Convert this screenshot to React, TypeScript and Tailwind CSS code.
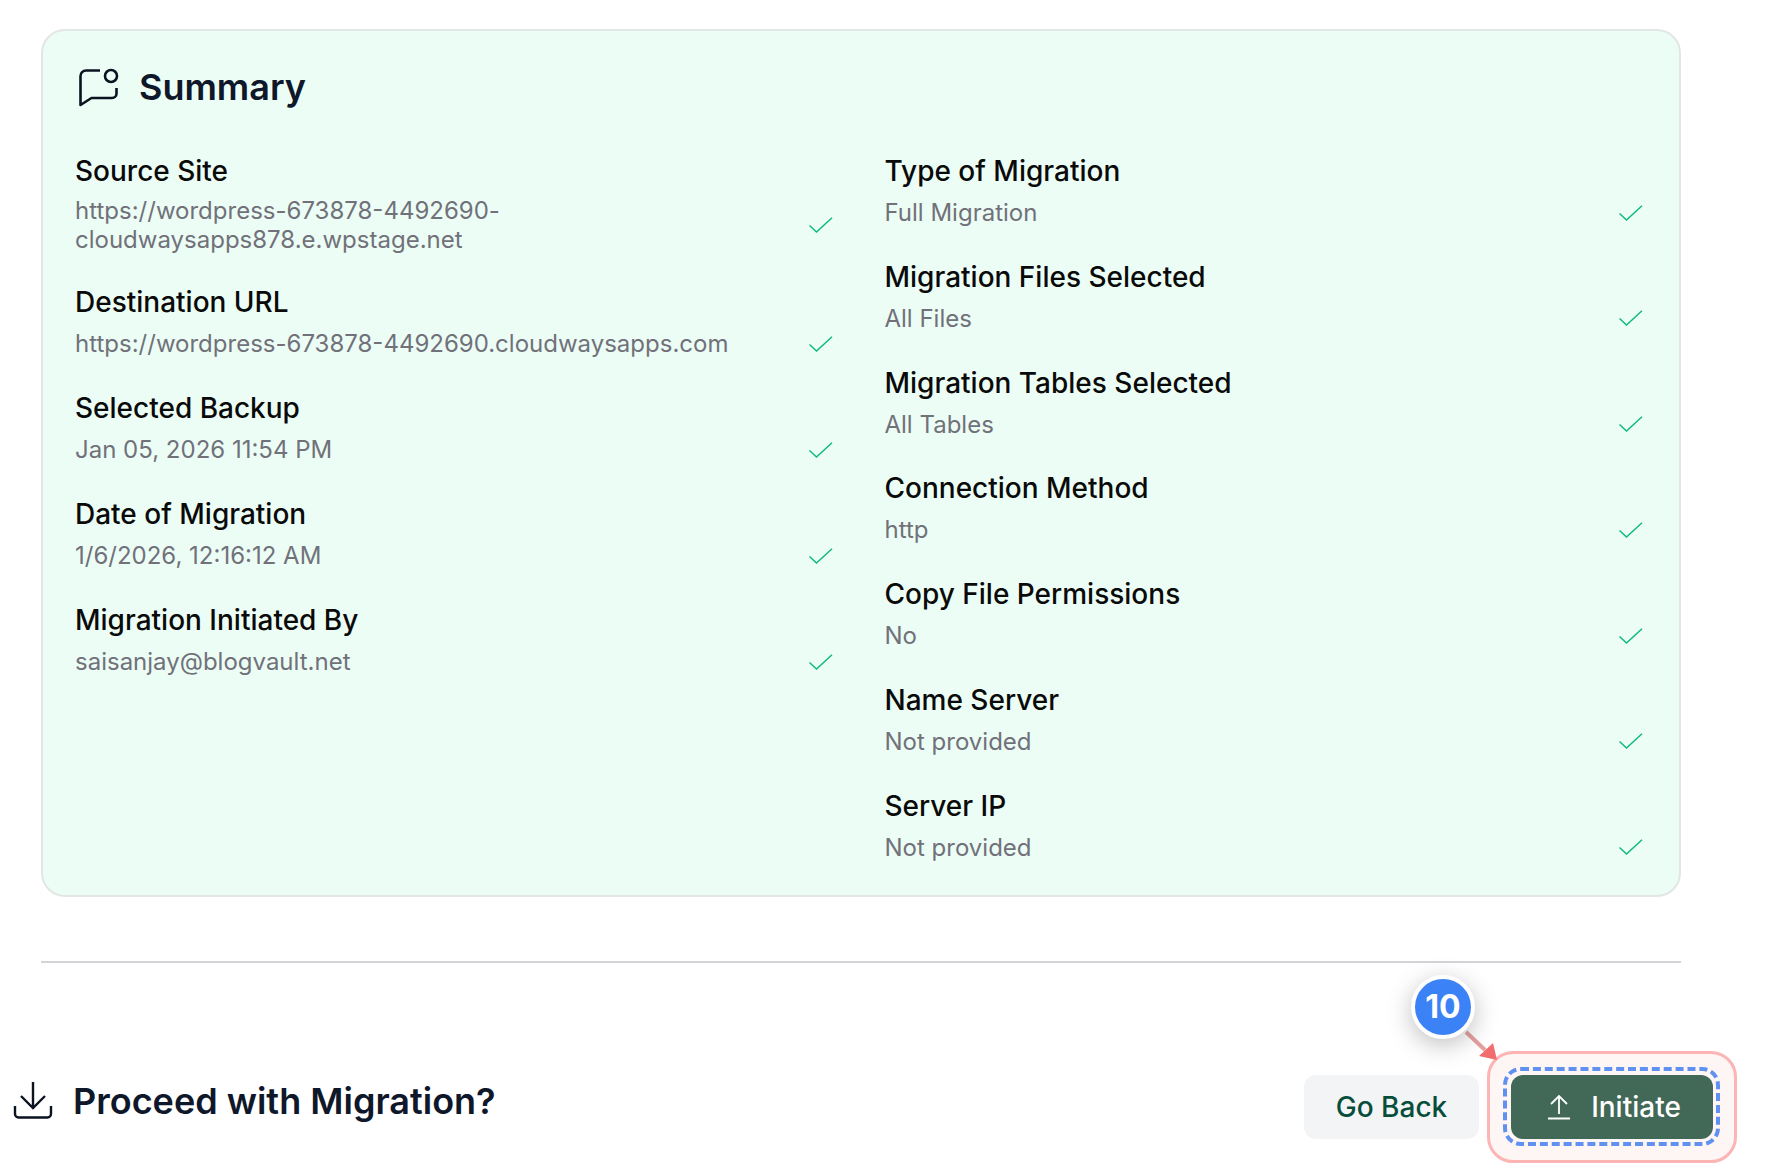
import React from "react";

const left = [
  ["Source Site", "https://wordpress-673878-4492690-cloudwaysapps878.e.wpstage.net"],
  ["Destination URL", "https://wordpress-673878-4492690.cloudwaysapps.com"],
  ["Selected Backup", "Jan 05, 2026 11:54 PM"],
  ["Date of Migration", "1/6/2026, 12:16:12 AM"],
  ["Migration Initiated By", "saisanjay@blogvault.net"],
];
const right = [
  ["Type of Migration", "Full Migration"],
  ["Migration Files Selected", "All Files"],
  ["Migration Tables Selected", "All Tables"],
  ["Connection Method", "http"],
  ["Copy File Permissions", "No"],
  ["Name Server", "Not provided"],
  ["Server IP", "Not provided"],
];

function Check() {
  return (
    <svg width="24" height="16" viewBox="0 0 24 16" fill="none" className="shrink-0">
      <path d="M0.5 8.5 L7.5 15 L23 0.8" stroke="#10b981" strokeWidth="1.5" />
    </svg>
  );
}

function Row({ label, value }: { label: string; value: string }) {
  return (
    <div className="flex flex-col">
      <div className="h-[36px] text-[28px] leading-[36px] font-medium text-[#0a0a0a]">{label}</div>
      <div className="mt-[7px] flex min-h-[33px] items-center justify-between gap-[60px]">
        <div className="text-[24px] leading-[29px] text-[#71717a]">{value}</div>
        <Check />
      </div>
    </div>
  );
}

export default function App() {
  return (
    <div
      className="relative h-[1172px] overflow-hidden bg-white pl-[13px] pr-[60px] pt-[29px]"
      style={{ fontFamily: "Inter, 'Noto Sans', sans-serif" }}
    >
      <section className="ml-[28px] mr-[32px] h-[868px] rounded-[24px] border-2 border-[#e2e6e5] bg-[#ecfdf5] pl-[32px] pr-[35px] pt-[32px]">
        <div className="flex h-[50px] items-center gap-[20px] pl-[4px]">
          <svg width="40" height="40" viewBox="0 0 40 40" fill="none" className="shrink-0">
            <path
              d="M21 2.5H7a5.5 5.5 0 0 0-5.5 5.5V37L12.5 30H33a4.5 4.5 0 0 0 4.5-4.5V20"
              stroke="#0b1220"
              strokeWidth="2.6"
              strokeLinejoin="round"
            />
            <circle cx="32" cy="8" r="6" stroke="#0b1220" strokeWidth="2.6" />
          </svg>
          <h2 className="mb-[2px] text-[36px] font-semibold leading-[48px] text-[#0f172a]">Summary</h2>
        </div>
        <div className="mt-[40px] grid grid-cols-2 gap-[50px]">
          <div className="flex flex-col gap-[30px] pr-[2px]">
            {left.map(([l, v]) => (
              <Row key={l} label={l} value={v} />
            ))}
          </div>
          <div className="flex flex-col gap-[29.8px] pr-[1px]">
            {right.map(([l, v]) => (
              <Row key={l} label={l} value={v} />
            ))}
          </div>
        </div>
      </section>

      <div className="ml-[28px] mr-[32px] mt-[64px] h-[2px] bg-[#d4d4d8]" />

      <div className="mt-[112px] flex items-center justify-between">
        <div className="mb-[12px] flex items-center gap-[20px]">
          <svg width="40" height="40" viewBox="0 0 40 40" fill="none" className="shrink-0">
            <path d="M2 25v8a3.5 3.5 0 0 0 3.5 3.5h29a3.5 3.5 0 0 0 3.5-3.5v-8" stroke="#0b1220" strokeWidth="2.4" />
            <path d="M20 1v25M8 15l12 12 12-12" stroke="#0b1220" strokeWidth="2.4" />
          </svg>
          <h2 className="text-[36px] font-semibold leading-[48px] text-[#0f172a]">Proceed with Migration?</h2>
        </div>
        <div className="flex items-center gap-[32px]">
          <button className="flex h-[64px] w-[175px] items-center justify-center rounded-[12px] bg-[#f3f4f6] text-[28px] font-medium text-[#064e3b]">
            Go Back
          </button>
          <div className="relative h-[64px] w-[202px]">
            <div className="absolute -inset-x-[24px] -inset-y-[24px] rounded-[26px] border-[3px] border-[#fdb4b4] bg-[#ef4444]/5" />
            <div className="absolute -left-[8px] -right-[7px] -top-[8px] -bottom-[7px] rounded-[18px] border-[4px] border-dashed border-[#6090f0]" />
            <button className="relative flex h-[64px] w-[202px] items-center justify-center gap-[20px] rounded-[12px] bg-[#426857] pl-[4px] text-[28px] font-medium text-white">
              <svg width="24" height="26" viewBox="0 0 24 26" fill="none">
                <path d="M12 20V2M4 10l8-8 8 8M1 24.5h22" stroke="#fff" strokeWidth="1.8" />
              </svg>
              Initiate
            </button>
            {/* Annotation pointer and badge */}
            <svg className="absolute -left-[51px] -top-[50px]" width="40" height="40" viewBox="0 0 40 40" fill="none">
              <path d="M6 7 L25 25" stroke="#e5a0a0" strokeWidth="4" />
              <path d="M19 31 L33 18 L37 35 Z" fill="#f26d6d" />
            </svg>
            <div className="absolute -left-[100px] -top-[100px] flex h-[64px] w-[64px] items-center justify-center rounded-full border-[4px] border-white bg-[#3b82f6] text-[32px] font-bold text-white shadow-[0_6px_24px_rgba(0,0,0,0.25)]">
              10
            </div>
          </div>
        </div>
      </div>
    </div>
  );
}
